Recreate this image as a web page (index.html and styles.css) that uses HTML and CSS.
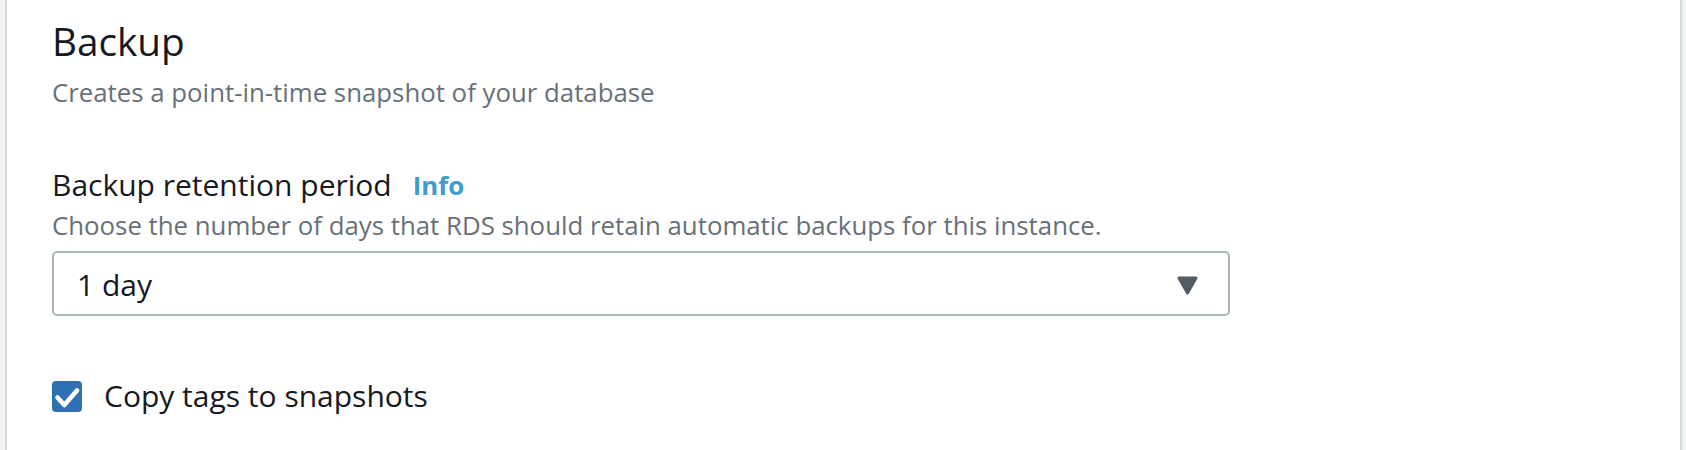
FILE: index.html
```html
<!DOCTYPE html>
<html lang="en">
<head>
<meta charset="utf-8">
<title>Backup</title>
<link rel="stylesheet" href="styles.css">
</head>
<body>
<div class="page">
  <section class="card">
    <h2 class="title">Backup</h2>
    <p class="subtitle">Creates a point-in-time snapshot of your database</p>

    <div class="field">
      <div class="label-row">
        <span class="label">Backup retention period</span>
        <a class="info" href="#">Info</a>
      </div>
      <p class="field-desc">Choose the number of days that RDS should retain automatic backups for this instance.</p>
      <div class="select">
        <span class="select-value">1 day</span>
        <svg class="caret" width="21" height="19" viewBox="0 0 21 19" aria-hidden="true">
          <polygon points="2,2 19,2 10.5,17" fill="#545b64" stroke="#545b64" stroke-width="3" stroke-linejoin="round"/>
        </svg>
      </div>
    </div>

    <label class="check-row">
      <span class="checkbox">
        <svg width="30" height="31" viewBox="0 0 30 31" aria-hidden="true">
          <polyline points="5.5,16.5 12.3,24 25,9.5" fill="none" stroke="#ffffff" stroke-width="4.6" stroke-linecap="round" stroke-linejoin="round"/>
        </svg>
      </span>
      <span class="check-label">Copy tags to snapshots</span>
    </label>
  </section>
</div>
</body>
</html>
```

FILE: styles.css
```css
html, body {
  margin: 0;
  padding: 0;
  background: #f2f3f3;
}

body {
  font-family: "Open Sans", "Noto Sans", sans-serif;
  color: #16191f;
}

.page {
  padding: 0 4px 0 5px;
}

.card {
  box-sizing: border-box;
  min-height: 450px;
  background: #ffffff;
  border-left: 2px solid #d5dbdb;
  border-right: 2px solid #d5dbdb;
  padding: 18px 0 0 45px;
}

.title {
  margin: 0;
  font-size: 38.7px;
  line-height: 46px;
  font-weight: 500;
  color: #16191f;
}

.subtitle {
  margin: 12px 0 0;
  font-size: 25.8px;
  line-height: 32px;
  color: #687078;
}

.field {
  margin-top: 58px;
}

.label-row {
  display: flex;
  align-items: center;
  gap: 21px;
}

.label {
  font-size: 30px;
  line-height: 38px;
  color: #16191f;
}

.info {
  font-size: 25.8px;
  line-height: 32px;
  font-weight: 700;
  color: #3f9dcb;
  text-decoration: none;
}

.field-desc {
  margin: 5px 0 0;
  font-size: 25.8px;
  line-height: 32px;
  color: #687078;
}

.select {
  box-sizing: border-box;
  width: 1178px;
  height: 65px;
  margin-top: 10px;
  border: 2px solid #aab7b8;
  border-radius: 5px;
  display: flex;
  align-items: center;
  justify-content: space-between;
  padding: 3px 30px 0 23px;
}

.select-value {
  font-size: 30px;
  line-height: 38px;
  color: #16191f;
}

.caret {
  display: block;
}

.check-row {
  margin-top: 61px;
  display: flex;
  align-items: center;
  gap: 22px;
}

.checkbox {
  width: 30px;
  height: 31px;
  border-radius: 4px;
  background: #2f6fb4;
  display: flex;
}

.checkbox svg {
  display: block;
}

.check-label {
  font-size: 30px;
  line-height: 38px;
  color: #16191f;
}
```
